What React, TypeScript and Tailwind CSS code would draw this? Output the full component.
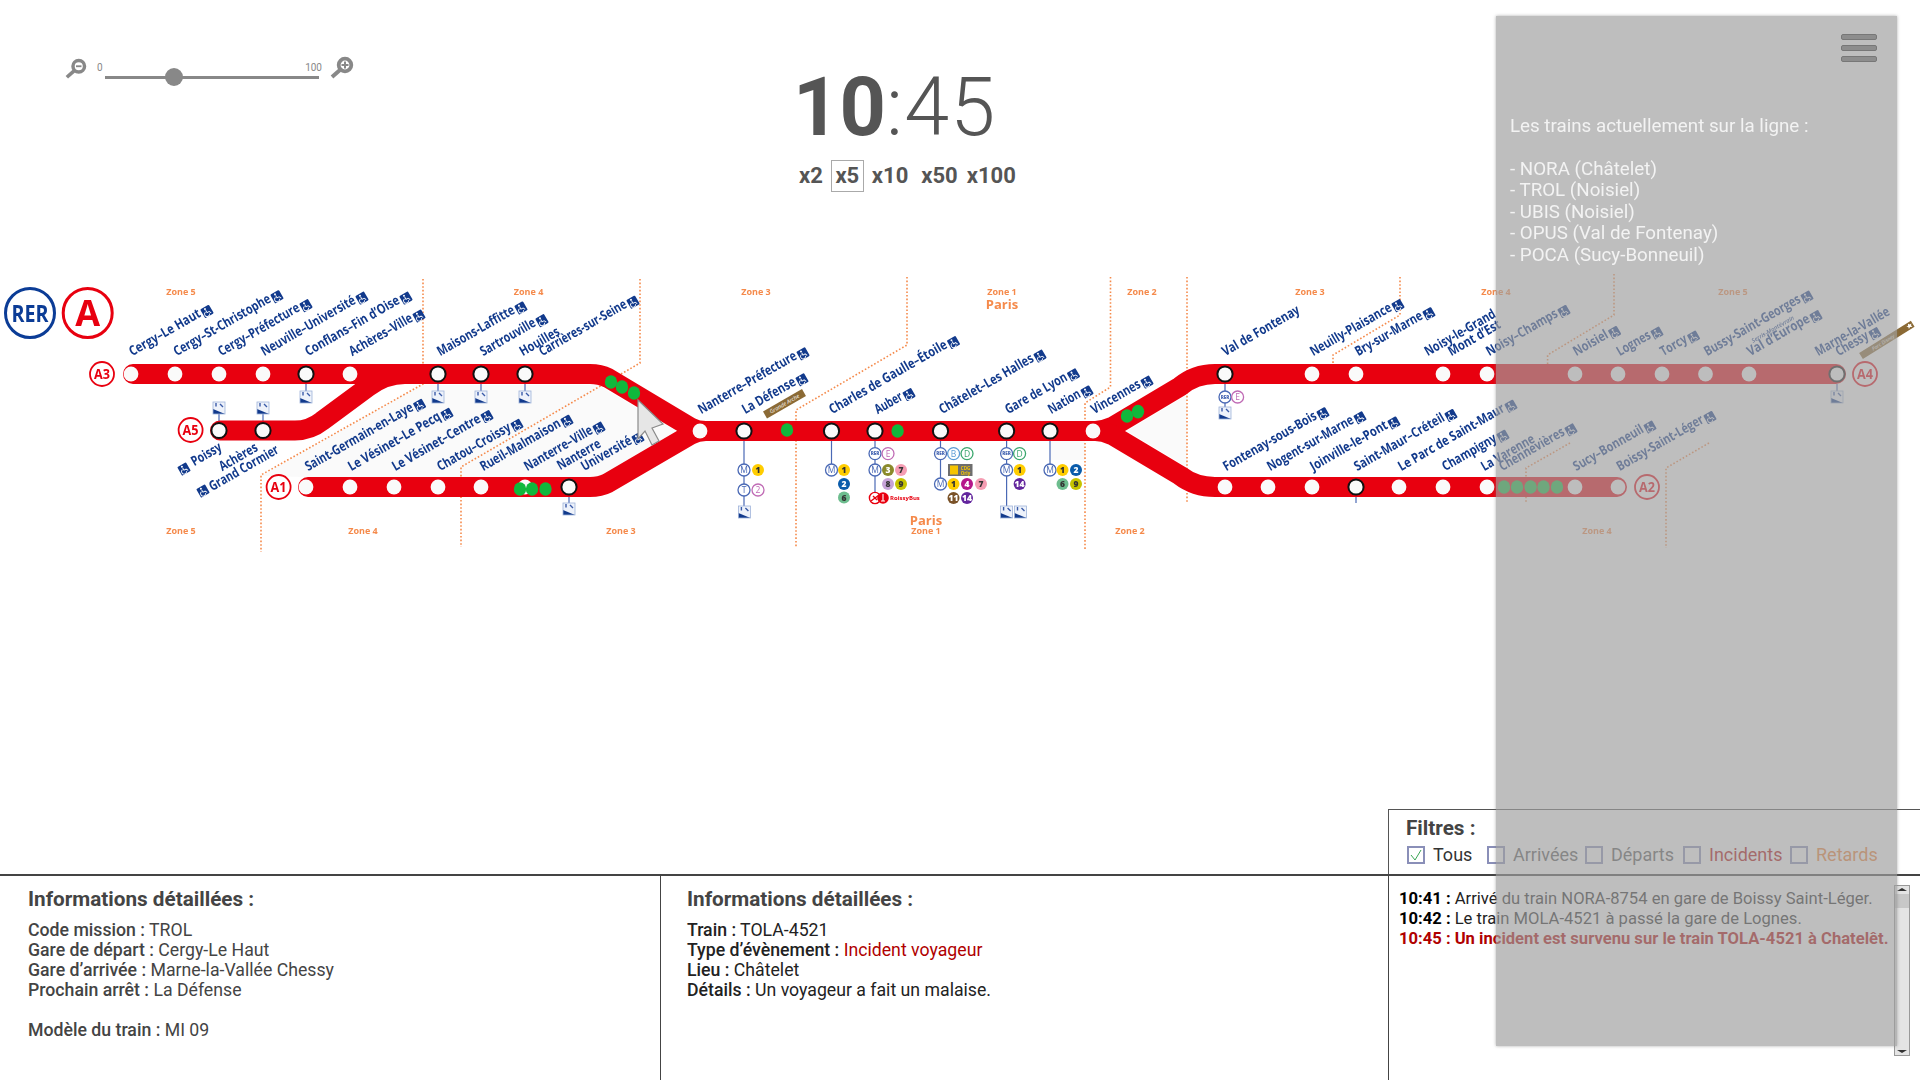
import React from "react";

const RED = "#e8000f";
const NAVY = "#123a8c";
const ORANGE = "#f58a4b";
const RING = "#4a69b5";
const COS = Math.cos((30 * Math.PI) / 180);

type L = [string, number, number, number, boolean];
const labels: L[] = [
  ["Cergy–Le Haut", 128, 357, 207, true],
  ["Cergy–St-Christophe", 172.5, 357, 277, true],
  ["Cergy–Préfecture", 217, 357, 306, true],
  ["Neuville–Université", 260, 357, 362, true],
  ["Conflans–Fin d’Oise", 304, 357, 406, true],
  ["Achères–Ville", 348, 357, 419, true],
  ["Maisons-Laffitte", 436, 357, 521, true],
  ["Sartrouville", 479, 357, 542, true],
  ["Houilles", 518.5, 357, 560, false],
  ["Carrières-sur-Seine", 538, 357, 633, true],
  ["Saint-Germain-en-Laye", 304, 472, 419.6, true],
  ["Le Vésinet–Le Pecq", 347, 472, 447, true],
  ["Le Vésinet–Centre", 391, 472, 487, true],
  ["Chatou–Croissy", 436, 472, 517, true],
  ["Rueil-Malmaison", 479, 472, 567, true],
  ["Nanterre–Ville", 523, 472, 599, true],
  ["Nanterre", 556, 471, 601, false],
  ["Université", 580, 472, 638, true],
  ["Poissy", 190, 467, 222, false],
  ["Achères", 218, 472, 258, false],
  ["Grand Cormier", 208, 492, 279, false],
  ["Nanterre–Préfecture", 697, 415, 803, true],
  ["La Défense", 741, 415, 802, true],
  ["Charles de Gaulle–Étoile", 828, 415, 953.5, true],
  ["Auber", 873.6, 415, 909, true],
  ["Châtelet–Les Halles", 938, 415, 1040, true],
  ["Gare de Lyon", 1004, 415, 1073.5, true],
  ["Nation", 1047, 415, 1087, true],
  ["Vincennes", 1090, 415, 1147, true],
  ["Val de Fontenay", 1221, 357, 1300, false],
  ["Neuilly-Plaisance", 1309, 357, 1398, true],
  ["Bry-sur-Marne", 1354, 357, 1429, true],
  ["Noisy-le-Grand", 1423.6, 357, 1496, false],
  ["Mont d’Est", 1447, 357, 1501, false],
  ["Noisy–Champs", 1485, 357, 1564, true],
  ["Noisiel", 1572, 357, 1614.6, true],
  ["Lognes", 1615.5, 357, 1657, true],
  ["Torcy", 1659, 357, 1693.6, true],
  ["Bussy-Saint-Georges", 1703, 357, 1807, true],
  ["Val d’Europe", 1746, 357, 1816, true],
  ["Marne-la-Vallée", 1814, 357, 1890, false],
  ["Chessy", 1834.5, 357, 1875, true],
  ["Fontenay-sous-Bois", 1222, 472, 1323, true],
  ["Nogent-sur-Marne", 1266, 472, 1360, true],
  ["Joinville-le-Pont", 1309, 472, 1394, true],
  ["Saint-Maur–Créteil", 1353, 472, 1451, true],
  ["Le Parc de Saint-Maur", 1397, 472, 1511, true],
  ["Champigny", 1441, 472, 1503, true],
  ["La Varenne", 1480, 472, 1535, false],
  ["Chennevières", 1498, 472, 1571, true],
  ["Sucy–Bonneuil", 1572, 472, 1650, true],
  ["Boissy-Saint-Léger", 1615.5, 472, 1710, true],
];

const plain: [number, number][] = [
  [131, 374], [175, 374], [219, 374], [263, 374], [350, 374],
  [306, 487], [350, 487], [394, 487], [438, 487], [481, 487], [525, 487],
  [700, 431], [1093, 431],
  [1312, 374], [1356, 374], [1443, 374], [1487, 374], [1575, 374], [1618, 374], [1662, 374], [1705.5, 374], [1749, 374],
  [1225, 487], [1268, 487], [1312, 487], [1399, 487], [1443, 487], [1487, 487], [1575, 487], [1618, 487],
];
const inter: [number, number][] = [
  [306, 374], [438, 374], [481, 374], [525, 374], [219, 430.5], [263, 430.5], [569, 487],
  [744, 431], [831.5, 431], [875, 431], [940.5, 431], [1006.6, 431], [1050, 431],
  [1225, 374], [1837, 374], [1356, 487],
];
const greens: [number, number][] = [
  [611, 382], [622, 387], [634, 393], [520, 489], [532, 489], [545.5, 489], [787, 430], [897.6, 431], [1127, 416], [1138, 411.6],
  [1504, 487], [1517, 487], [1530.6, 487], [1543.5, 487], [1557, 487],
];
const zones: [string, number, number][] = [
  ["Zone 5", 181, 295], ["Zone 4", 528.6, 295], ["Zone 3", 756, 295], ["Zone 1", 1002, 295], ["Zone 2", 1142, 295], ["Zone 3", 1310, 295], ["Zone 4", 1496, 295], ["Zone 5", 1733, 295],
  ["Zone 5", 181, 534], ["Zone 4", 363, 534], ["Zone 3", 621, 534], ["Zone 1", 926, 534], ["Zone 2", 1130, 534], ["Zone 4", 1597, 534],
];
const dotted = [
  "M423 279V384L261 475V552",
  "M640 279V363L461 467V547",
  "M907 277V345L796 410V547",
  "M1110.5 277V387L1085 403V550",
  "M1187 277V502",
  "M1400 277V315L1333 355V364",
  "M1614 274V315L1547.6 355V364",
  "M1570 443L1526 468V503",
  "M1709 443L1666 468V548",
];
const conns = [
  "M306 384V392", "M438 384V392", "M481 384V392", "M525 384V392",
  "M219 414V422", "M263 414V422", "M569 497V504",
  "M1225 384V408", "M1837 384V392", "M1356 497V503",
  "M744 441V506", "M831.5 441V465", "M875 441V494", "M940.5 441V480", "M1006.6 441V506", "M1050 441V465",
];
const stairs: [number, number][] = [
  [306, 397], [438, 397], [481, 397], [525, 397], [219, 408], [263, 408], [569, 509], [1225, 413], [1837, 397], [744.4, 512], [1006.6, 512], [1020.5, 512],
];
const rings: [string, number, number, string][] = [
  ["REB", 1225, 397, RING], ["E", 1237.6, 397, "#c06bb5"],
  ["M", 744, 470, RING], ["T", 744, 490, RING], ["2", 758, 490, "#c06bb5"],
  ["M", 831.5, 470, RING],
  ["REB", 875, 453.6, RING], ["E", 888, 453.6, "#c06bb5"], ["M", 875, 470, RING],
  ["REB", 940.5, 453.6, RING], ["B", 953.6, 453.6, "#5b9bd5"], ["D", 967, 453.6, "#3aa76d"], ["M", 940.5, 484, RING],
  ["REB", 1006.6, 453.6, RING], ["D", 1019.6, 453.6, "#3aa76d"], ["M", 1006.6, 470, RING],
  ["M", 1050, 470, RING],
];
const metros: [string, number, number, string, string][] = [
  ["1", 758, 470, "#ffcd00", "#333"],
  ["1", 844, 470, "#ffcd00", "#333"], ["2", 844, 484, "#0a5cab", "#fff"], ["6", 844, 497.6, "#6dbd8e", "#333"],
  ["3", 888, 470, "#8a8a2b", "#fff"], ["7", 901, 470, "#f59db3", "#333"], ["8", 888, 484, "#c6a3d8", "#333"], ["9", 901, 484, "#c6c400", "#333"],
  ["1", 953.5, 484, "#ffcd00", "#333"], ["4", 967, 484, "#b5178a", "#fff"], ["7", 981, 484, "#f59db3", "#333"], ["11", 953.5, 498, "#7a5228", "#fff"], ["14", 967, 498, "#62259d", "#fff"],
  ["1", 1019.6, 470, "#ffcd00", "#333"], ["14", 1019.6, 484, "#62259d", "#fff"],
  ["1", 1062.5, 470, "#ffcd00", "#333"], ["2", 1076, 470, "#0a5cab", "#fff"], ["6", 1062.5, 484, "#6dbd8e", "#333"], ["9", 1076, 484, "#c6c400", "#333"],
];
const lineTags: [string, number, number][] = [["A3", 102, 374], ["A5", 190.6, 430], ["A1", 278.6, 487], ["A4", 1865, 374], ["A2", 1647, 487]];

function Access({ x, y, rotate = 0 }: { x: number; y: number; rotate?: number }) {
  return (
    <g transform={`translate(${x} ${y}) rotate(${rotate})`}>
      <rect x={-5} y={-5} width={10} height={10} rx={1} fill={NAVY} />
      <circle cx={-0.6} cy={-3} r={1} fill="#fff" />
      <path d="M-0.6 -1.6V1.1H1.8L2.9 3.4M-1.7 -0.2A2.5 2.5 0 1 0 1.1 3.1" fill="none" stroke="#fff" strokeWidth={0.9} />
    </g>
  );
}

function Stairs({ x, y }: { x: number; y: number }) {
  return (
    <g transform={`translate(${x} ${y})`}>
      <rect x={-6} y={-6} width={12} height={12} fill="#eef2fa" />
      <path d="M-6 1L6 6H-6Z" fill={NAVY} />
      <path d="M-3 -5V-1.5M1 -4L4 -1" stroke="#3a5ba8" strokeWidth={1.4} fill="none" />
      <rect x={-6} y={-6} width={12} height={12} fill="none" stroke="#9fb3da" strokeWidth={0.8} />
    </g>
  );
}

function Diagram() {
  const lineProps = { fill: "none", stroke: RED, strokeWidth: 20, strokeLinecap: "round" as const };
  return (
    <svg viewBox="0 260 1920 300" className="block w-[1920px] h-[300px] blur-[0.35px]" fontFamily="'Open Sans', sans-serif">
      <path d="M421 385H598L676 431L602 477H306L261 476Z" fill="#fafafa" />
      <path d="M1127 431L1187 395V467ZM1050 441H1085V460H1050Z" fill="#fafafa" />
      {dotted.map((d) => (
        <path key={d} d={d} fill="none" stroke={ORANGE} strokeWidth={1.6} strokeDasharray="1.6 2" />
      ))}
      {zones.map(([t, x, y], i) => (
        <text key={i} x={x} y={y} textAnchor="middle" fontSize={9} fontWeight={700} fill={ORANGE}>{t}</text>
      ))}
      <text x={1002} y={309} textAnchor="middle" fontSize={13} fontWeight={700} fill={ORANGE}>Paris</text>
      <text x={926} y={525} textAnchor="middle" fontSize={13} fontWeight={700} fill={ORANGE}>Paris</text>

      {conns.map((d) => (
        <path key={d} d={d} stroke={RING} strokeWidth={1.2} fill="none" />
      ))}

      <path d="M220 430.5H295Q310 430.5 322 421L368 387Q385 374 405 374" {...lineProps} />
      <path d="M133 374H590Q600 374 608 378L690 427Q697 431 706 431" {...lineProps} />
      <path d="M308 487H590Q600 487 608 483L690 435Q697 431 706 431" {...lineProps} />
      <path d="M700 431H1095" {...lineProps} />
      <path d="M1095 431Q1103 431 1112 427L1180 386.5Q1195 374 1215 374H1836" {...lineProps} />
      <path d="M1095 431Q1103 431 1112 435L1180 475.5Q1195 487 1215 487H1617" {...lineProps} />

      {plain.map(([x, y], i) => (
        <circle key={i} cx={x} cy={y} r={7.4} fill="#fafafa" />
      ))}
      {inter.map(([x, y], i) => (
        <circle key={i} cx={x} cy={y} r={7.6} fill="#fafafa" stroke="#111" strokeWidth={2} />
      ))}
      {greens.map(([x, y], i) => (
        <ellipse key={i} cx={x} cy={y} rx={6.2} ry={6.8} fill="#10b83c" />
      ))}

      {labels.map(([t, x, y, ex, icon]) => {
        const dist = (ex - x) / COS;
        return (
          <g key={t + x} transform={`translate(${x} ${y}) rotate(-30)`}>
            <text x={4} y={1.5} fontSize={13.5} fontWeight={700} fill={NAVY} textLength={icon ? dist - 11 : dist - 4} lengthAdjust="spacingAndGlyphs">{t}</text>
            {icon && <Access x={dist} y={0} />}
          </g>
        );
      })}
      <Access x={184} y={469} rotate={-30} />
      <Access x={203} y={491} rotate={-30} />

      <g transform="translate(765 415) rotate(-30)">
        <rect x={0} y={-4} width={45} height={8} fill="#8b6a35" />
        <text x={22.5} y={2} textAnchor="middle" fontSize={5.5} fontStyle="italic" fill="#fff">Grande Arche</text>
      </g>
      <g transform="translate(1861 356) rotate(-32)">
        <rect x={0} y={-3.5} width={61} height={7} fill="#8b6a35" />
        <text x={26} y={2} textAnchor="middle" fontSize={5} fontStyle="italic" fill="#fff">Parc Disney</text>
        <path d="M57 -2.5L58 -.8L60 -.8L58.6 .5L59.2 2.4L57 1.3L55 2.4L55.5 .5L54 -.8L56 -.8Z" fill="#fff" />
      </g>
      <g transform="translate(1753 343) rotate(-30)">
        <text fontSize={6} fontStyle="italic" fontWeight={600} fill={NAVY} textLength={48} lengthAdjust="spacingAndGlyphs">Serris-Montévrain</text>
      </g>

      {stairs.map(([x, y], i) => (
        <Stairs key={i} x={x} y={y} />
      ))}
      {rings.map(([t, x, y, c], i) => (
        <g key={i}>
          <circle cx={x} cy={y} r={6} fill="#fff" stroke={c} strokeWidth={1.3} />
          <text x={x} y={y + (t === "REB" ? 1.6 : 3)} textAnchor="middle" fontSize={t === "REB" ? 4.6 : 8.5} fontWeight={t === "REB" ? 800 : 500} fill={c}>{t === "REB" ? "RER" : t}</text>
        </g>
      ))}
      {metros.map(([t, x, y, bg, fg], i) => (
        <g key={i}>
          <circle cx={x} cy={y} r={6} fill={bg} />
          <text x={x} y={y + 3} textAnchor="middle" fontSize={8.5} fontWeight={800} fill={fg}>{t}</text>
        </g>
      ))}

      <rect x={948} y={464} width={24.5} height={12} fill="#6e6e6e" />
      <rect x={950} y={465.5} width={8} height={9} fill="#f5c400" />
      <text x={965.5} y={469.5} textAnchor="middle" fontSize={4.5} fontWeight={700} fill="#f5c400">CDG</text>
      <text x={965.5} y={474.5} textAnchor="middle" fontSize={4.5} fontWeight={700} fill="#f5c400">Orly</text>
      <circle cx={875} cy={498} r={5.6} fill="#fff" stroke={RED} strokeWidth={1.4} />
      <path d="M871 501L879 495M873 496L877 500" stroke={RED} strokeWidth={1.4} />
      <circle cx={883} cy={498} r={5.8} fill={RED} />
      <path d="M883 494V501M881 501H885" stroke="#fff" strokeWidth={1.1} />
      <text x={890} y={500} fontSize={6} fontWeight={700} fill={RED}>RoissyBus</text>

      {lineTags.map(([t, x, y]) => (
        <g key={t}>
          <circle cx={x} cy={y} r={12} fill="#fff" stroke={RED} strokeWidth={1.8} />
          <text x={x} y={y + 5.4} textAnchor="middle" fontSize={15} fontWeight={700} fill={RED} textLength={16} lengthAdjust="spacingAndGlyphs">{t}</text>
        </g>
      ))}
      <circle cx={30} cy={313} r={24.5} fill="#fff" stroke="#0b3c96" strokeWidth={3} />
      <text x={30} y={321.5} textAnchor="middle" fontSize={24} fontWeight={700} fill="#0b3c96" textLength={37} lengthAdjust="spacingAndGlyphs">RER</text>
      <circle cx={87.7} cy={313} r={24.5} fill="#fff" stroke={RED} strokeWidth={3} />
      <text x={87.7} y={326} textAnchor="middle" fontSize={36} fontWeight={700} fill={RED}>A</text>

      <path d="M638 400V439L645 431L652 445L659 441L652 428L663 424Z" fill="#e6e6e6" stroke="#8a8a8a" strokeWidth={1.2} />
    </svg>
  );
}

function Magnifier({ plus }: { plus?: boolean }) {
  return (
    <svg viewBox="0 0 24 24" className={plus ? "w-[24px] h-[24px]" : "w-[22px] h-[22px]"}>
      <circle cx={15} cy={9} r={6.3} fill="#fff" stroke="#888" strokeWidth={3.8} />
      <path d="M10.5 13.5L2 21" stroke="#888" strokeWidth={4} />
      <path d={plus ? "M11.5 9H18.5M15 5.5V12.5" : "M12 9H18"} stroke="#888" strokeWidth={2} />
    </svg>
  );
}

function Check({ label, color, checked, className }: { label: string; color: string; checked?: boolean; className: string }) {
  return (
    <div className={`flex items-center gap-[8px] ${className}`}>
      <span className="flex items-center justify-center w-[18px] h-[18px] border-2 border-[#8a8fb8] bg-white">
        {checked && (
          <svg viewBox="0 0 14 14" className="w-[14px] h-[14px]">
            <path d="M2 7L6 12L12 2" fill="none" stroke="#3aa655" strokeWidth={1} />
          </svg>
        )}
      </span>
      <span className={`text-[18px] leading-[20px] ${color}`}>{label}</span>
    </div>
  );
}

export default function App() {
  return (
    <div className="relative flex flex-col w-[1920px] h-[1080px] overflow-hidden bg-white font-[Roboto,sans-serif]">
      <header className="flex items-start h-[260px] shrink-0">
        <div className="flex items-end ml-[65px] mt-[56px] w-[291px]">
          <Magnifier />
          <div className="relative ml-[18px] w-[214px] h-[24px]">
            <span className="absolute left-[-8px] top-[6px] text-[10px] leading-[12px] text-[#888]">0</span>
            <span className="absolute right-[-3px] top-[6px] text-[10px] leading-[12px] text-[#888]">100</span>
            <div className="absolute left-0 right-0 bottom-[1px] h-[3px] bg-[#888]" />
            <div className="absolute left-[60px] bottom-[-6px] w-[18px] h-[18px] rounded-full bg-[#888]" />
          </div>
          <div className="ml-[11px]"><Magnifier plus /></div>
        </div>
        <div className="ml-[437px] mt-[60px] text-[#555]">
          <div className="text-[81px] leading-[96px] whitespace-nowrap font-light">
            <span className="font-bold">10</span><span className="tracking-[1.2px]">:45</span>
          </div>
          <div className="flex items-center mt-[4px] ml-[6px] text-[22px] leading-[32px] font-bold">
            <span>x2</span>
            <span className="flex items-center justify-center ml-[8px] w-[33px] h-[32px] border border-[#aaa]">x5</span>
            <span className="ml-[8px]">x10</span>
            <span className="ml-[13px]">x50</span>
            <span className="ml-[9px]">x100</span>
          </div>
        </div>
      </header>

      <Diagram />

      <div className="h-[249px] shrink-0" />

      <div className="flex justify-end h-[67px] shrink-0 border-b-2 border-[#444]">
        <div className="w-[532px] border-l border-t border-[#555] pl-[17px] pt-[6px]">
          <div className="text-[20.7px] leading-[24px] font-bold text-[#444]">Filtres :</div>
          <div className="flex items-center mt-[5px] ml-[1px]">
            <Check label="Tous" color="text-[#333]" checked className="w-[80px]" />
            <Check label="Arrivées" color="text-[#555]" className="w-[98px]" />
            <Check label="Départs" color="text-[#555]" className="w-[98px]" />
            <Check label="Incidents" color="text-[#b00000]" className="w-[107px]" />
            <Check label="Retards" color="text-[#f08030]" className="w-[100px]" />
          </div>
        </div>
      </div>

      <div className="flex flex-1 min-h-0">
        <section className="w-[661px] border-r border-[#444] pl-[28px] pt-[11px] text-[17.7px] leading-[20px] text-[#444]">
          <h2 className="text-[20.7px] leading-[24px] font-bold text-[#444] mb-[9px]">Informations détaillées :</h2>
          <p><b className="font-medium">Code mission :</b> TROL</p>
          <p><b className="font-medium">Gare de départ :</b> Cergy-Le Haut</p>
          <p><b className="font-medium">Gare d’arrivée :</b> Marne-la-Vallée Chessy</p>
          <p><b className="font-medium">Prochain arrêt :</b> La Défense</p>
          <p className="mt-[20px]"><b className="font-medium">Modèle du train :</b> MI 09</p>
        </section>
        <section className="w-[728px] border-r border-[#444] pl-[26px] pt-[11px] text-[17.7px] leading-[20px] text-[#222]">
          <h2 className="text-[20.7px] leading-[24px] font-bold text-[#444] mb-[9px]">Informations détaillées :</h2>
          <p><b className="font-medium">Train :</b> TOLA-4521</p>
          <p><b className="font-medium">Type d’évènement :</b> <span className="text-[#b00000]">Incident voyageur</span></p>
          <p><b className="font-medium">Lieu :</b> Châtelet</p>
          <p><b className="font-medium">Détails :</b> Un voyageur a fait un malaise.</p>
        </section>
        <section className="flex flex-1 min-w-0">
          <div className="flex-1 min-w-0 pl-[10px] pt-[13px] text-[16.6px] leading-[20px] text-[#222] whitespace-nowrap">
            <p><b className="font-bold text-black">10:41 :</b> Arrivé du train NORA-8754 en gare de Boissy Saint-Léger.</p>
            <p><b className="font-bold text-black">10:42 :</b> Le train MOLA-4521 à passé la gare de Lognes.</p>
            <p className="font-bold text-[#b00000]">10:45 : Un incident est survenu sur le train TOLA-4521 à Chatelêt.</p>
          </div>
          <div className="flex flex-col items-center w-[16px] h-[171px] mt-[9px] mr-[10px] shrink-0 border border-[#999] bg-[#e4e4e4]">
            <span className="mt-[2px] w-0 h-0 border-x-[5px] border-x-transparent border-b-[3px] border-b-[#333]" />
            <span className="mt-[3px] w-[14px] h-[14px] bg-[#c8c8c8]" />
            <span className="mt-auto mb-[2px] w-0 h-0 border-x-[5px] border-x-transparent border-t-[3px] border-t-[#333]" />
          </div>
        </section>
      </div>

      <aside className="absolute left-[1496px] top-[16px] w-[401px] h-[1030px] bg-[rgba(158,158,158,0.67)] shadow-[0_0_3px_rgba(120,120,120,0.6)]">
        <div className="flex flex-col gap-[5px] items-end pt-[18px] pr-[20px]">
          <span className="w-[36px] h-[6px] rounded-[2px] bg-[#8d8d8d] border border-[#777]" />
          <span className="w-[36px] h-[6px] rounded-[2px] bg-[#8d8d8d] border border-[#777]" />
          <span className="w-[36px] h-[6px] rounded-[2px] bg-[#8d8d8d] border border-[#777]" />
        </div>
        <div className="ml-[14px] mt-[53.5px] text-[18.75px] leading-[21.5px] text-[#f3f3f3] whitespace-pre-line">
          {"Les trains actuellement sur la ligne :\n\n- NORA (Châtelet)\n- TROL (Noisiel)\n- UBIS (Noisiel)\n- OPUS (Val de Fontenay)\n- POCA (Sucy-Bonneuil)"}
        </div>
      </aside>
    </div>
  );
}
